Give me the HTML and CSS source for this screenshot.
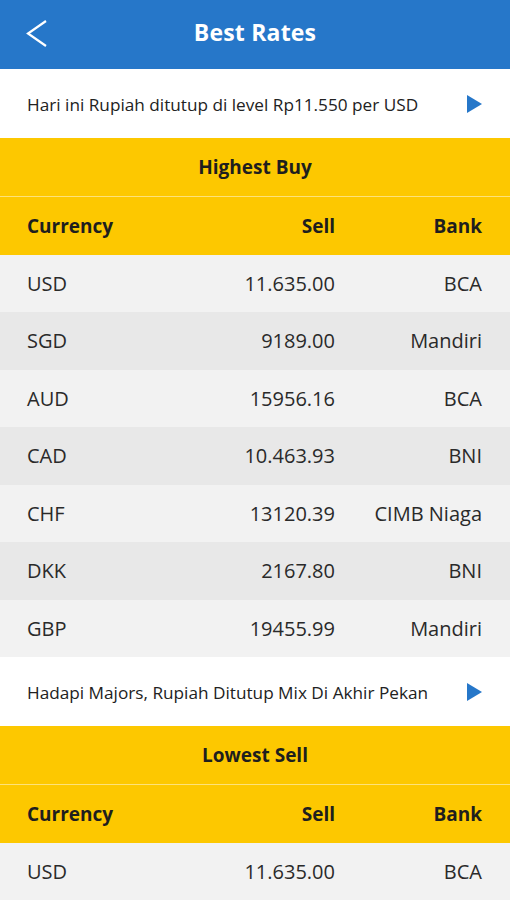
FILE: index.html
```html
<!DOCTYPE html>
<html lang="id">
<head>
    <meta charset="UTF-8">
    <meta name="viewport" content="width=device-width, initial-scale=1.0">
    <title>Best Rates</title>
    <link rel="stylesheet" href="styles.css">
</head>
<body>
    <div class="topbar">
        <svg class="back" width="24" height="30" viewBox="0 0 24 30">
            <path d="M21 2 L3 14.5 L21 27" fill="none" stroke="#fff" stroke-width="2.2"/>
        </svg>
        <div class="title">Best Rates</div>
    </div>

    <div class="news">
        <span>Hari ini Rupiah ditutup di level Rp11.550 per USD</span>
        <span class="play"></span>
    </div>

    <div class="section-title">Highest Buy</div>
    <div class="row head">
        <span class="cur">Currency</span>
        <span class="sell">Sell</span>
        <span class="bank">Bank</span>
    </div>
    <div class="row light"><span class="cur">USD</span><span class="sell">11.635.00</span><span class="bank">BCA</span></div>
    <div class="row dark"><span class="cur">SGD</span><span class="sell">9189.00</span><span class="bank">Mandiri</span></div>
    <div class="row light"><span class="cur">AUD</span><span class="sell">15956.16</span><span class="bank">BCA</span></div>
    <div class="row dark"><span class="cur">CAD</span><span class="sell">10.463.93</span><span class="bank">BNI</span></div>
    <div class="row light"><span class="cur">CHF</span><span class="sell">13120.39</span><span class="bank">CIMB Niaga</span></div>
    <div class="row dark"><span class="cur">DKK</span><span class="sell">2167.80</span><span class="bank">BNI</span></div>
    <div class="row light"><span class="cur">GBP</span><span class="sell">19455.99</span><span class="bank">Mandiri</span></div>

    <div class="news">
        <span>Hadapi Majors, Rupiah Ditutup Mix Di Akhir Pekan</span>
        <span class="play"></span>
    </div>

    <div class="section-title">Lowest Sell</div>
    <div class="row head">
        <span class="cur">Currency</span>
        <span class="sell">Sell</span>
        <span class="bank">Bank</span>
    </div>
    <div class="row light"><span class="cur">USD</span><span class="sell">11.635.00</span><span class="bank">BCA</span></div>
</body>
</html>
```

FILE: styles.css
```css
body {
    margin: 0;
    font-family: "Open Sans", "Liberation Sans", sans-serif;
    color: #222;
    background: #fff;
    overflow: hidden;
}
.topbar {
    height: 69px;
    background: #2677c9;
    display: flex;
    align-items: center;
    justify-content: center;
    position: relative;
}
.back {
    position: absolute;
    left: 25px;
    top: 19px;
}
.title {
    color: #fff;
    font-size: 23px;
    font-weight: bold;
    letter-spacing: 0.2px;
    margin-bottom: 5px;
}
.news {
    height: 69px;
    display: flex;
    align-items: center;
    justify-content: space-between;
    padding: 0 28px 0 27px;
    font-size: 17.2px;
    color: #222;
}
.news span:first-child {
    margin-top: 2px;
}
.play {
    width: 0;
    height: 0;
    border-top: 9px solid transparent;
    border-bottom: 9px solid transparent;
    border-left: 15px solid #2677c9;
}
.section-title {
    height: 58px;
    background: #fdc800;
    display: flex;
    align-items: center;
    justify-content: center;
    font-size: 19px;
    font-weight: bold;
    color: #1e1e1e;
    border-bottom: 1px solid #fde27a;
}
.row {
    height: 57.5px;
    display: grid;
    grid-template-columns: 1fr 160px 147px;
    align-items: center;
    padding: 0 28px 0 27px;
    font-size: 20px;
    color: #2a2a2a;
}
.row .sell, .row .bank {
    text-align: right;
}
.row.head {
    background: #fdc800;
    font-weight: bold;
    font-size: 19px;
    color: #1e1e1e;
}
.row.light {
    background: #f2f2f2;
}
.row.dark {
    background: #e8e8e8;
}
```
